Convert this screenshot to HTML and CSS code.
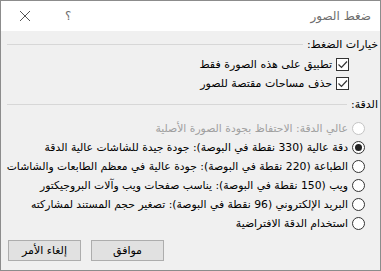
FILE: index.html
```html
<!DOCTYPE html>
<html lang="ar" dir="rtl">

<head>
    <meta charset="utf-8">
    <link rel="stylesheet" href="styles.css">
</head>

<body>
    <div class="dialog">
        <div class="titlebar">
            <span class="title">ضغط الصور</span>
            <span class="help">؟</span>
            <svg class="close" width="12" height="12" viewBox="0 0 12 12">
                <path d="M1 1 L11 11 M11 1 L1 11" stroke="#555" stroke-width="1" fill="none" />
            </svg>
        </div>
        <div class="content">
            <div class="group-title">خيارات الضغط:</div>
            <div class="checks">
                <label class="row">
                    <span class="checkbox"><svg width="11" height="11" viewBox="0 0 11 11"><path d="M1.5 5.5 L4.5 8.5 L10 2.5" stroke="#333" stroke-width="1.2" fill="none" /></svg></span>
                    <span>تطبيق على هذه الصورة فقط</span>
                </label>
                <label class="row">
                    <span class="checkbox"><svg width="11" height="11" viewBox="0 0 11 11"><path d="M1.5 5.5 L4.5 8.5 L10 2.5" stroke="#333" stroke-width="1.2" fill="none" /></svg></span>
                    <span>حذف مساحات مقتصة للصور</span>
                </label>
            </div>
            <div class="group-title second">الدقة:</div>
            <div class="radios">
                <label class="row disabled">
                    <span class="radio"></span>
                    <span>عالي الدقة: الاحتفاظ بجودة الصورة الأصلية</span>
                </label>
                <label class="row">
                    <span class="radio checked"></span>
                    <span>دقة عالية (330 نقطة في البوصة): جودة جيدة للشاشات عالية الدقة</span>
                </label>
                <label class="row">
                    <span class="radio"></span>
                    <span>الطباعة (220 نقطة في البوصة): جودة عالية في معظم الطابعات والشاشات</span>
                </label>
                <label class="row">
                    <span class="radio"></span>
                    <span>ويب (150 نقطة في البوصة): يناسب صفحات ويب وآلات البروجيكتور</span>
                </label>
                <label class="row">
                    <span class="radio"></span>
                    <span>البريد الإلكتروني (96 نقطة في البوصة): تصغير حجم المستند لمشاركته</span>
                </label>
                <label class="row">
                    <span class="radio"></span>
                    <span>استخدام الدقة الافتراضية</span>
                </label>
            </div>
            <div class="buttons">
                <button class="btn">موافق</button>
                <button class="btn">إلغاء الأمر</button>
            </div>
        </div>
    </div>
</body>

</html>
```

FILE: styles.css
```css
* {
    padding: 0;
    margin: 0;
    box-sizing: border-box;
}

body {
    width: 381px;
    height: 271px;
    font-family: 'DejaVu Sans', sans-serif;
    font-size: 11px;
    color: #000;
    overflow: hidden;
}

.dialog {
    width: 381px;
    height: 271px;
    border: 1px solid #8c8c8c;
    background: #f0f0f0;
    display: flex;
    flex-direction: column;
}

.titlebar {
    height: 30px;
    background: #fff;
    display: flex;
    align-items: center;
    padding-right: 9px;
}

.title {
    color: #6e6e6e;
    font-size: 12px;
    flex: 1;
}

.help {
    color: #6e6e6e;
    font-size: 12px;
    margin-left: 34px;
}

.close {
    margin-left: 18px;
}

.content {
    flex: 1;
    padding: 5px 2px 0 6px;
}

.group-title {
    height: 16px;
    display: flex;
    align-items: center;
    gap: 4px;
}

.group-title::after {
    content: '';
    flex: 1;
    border-top: 1px solid #d7d7d7;
}

.group-title.second {
    margin-top: 3px;
}

.checks {
    margin-top: 3px;
    padding-right: 29px;
}

.radios {
    margin-top: 7px;
    padding-right: 13px;
}

.row {
    height: 19px;
    display: flex;
    align-items: center;
    gap: 4px;
    white-space: nowrap;
}

.radios .row span:last-child {
    font-size: 10.8px;
}

.row.disabled {
    color: #a0a0a0;
}

.checkbox {
    width: 13px;
    height: 13px;
    flex-shrink: 0;
    border: 1px solid #333;
    background: #fff;
    display: flex;
    align-items: center;
    justify-content: center;
}

.radio {
    width: 13px;
    height: 13px;
    flex-shrink: 0;
    border: 1px solid #333;
    border-radius: 50%;
    background: #fff;
    display: flex;
    align-items: center;
    justify-content: center;
}

.disabled .radio {
    border-color: #c4c4c4;
}

.radio.checked::after {
    content: '';
    width: 7px;
    height: 7px;
    border-radius: 50%;
    background: #222;
}

.buttons {
    margin-top: 7px;
    display: flex;
    gap: 10px;
    justify-content: flex-end;
    padding-left: 1px;
}

.btn {
    width: 73px;
    height: 21px;
    border: 1px solid #adadad;
    background: #e1e1e1;
    font-family: 'DejaVu Sans', sans-serif;
    font-size: 11px;
    color: #000;
}
```
